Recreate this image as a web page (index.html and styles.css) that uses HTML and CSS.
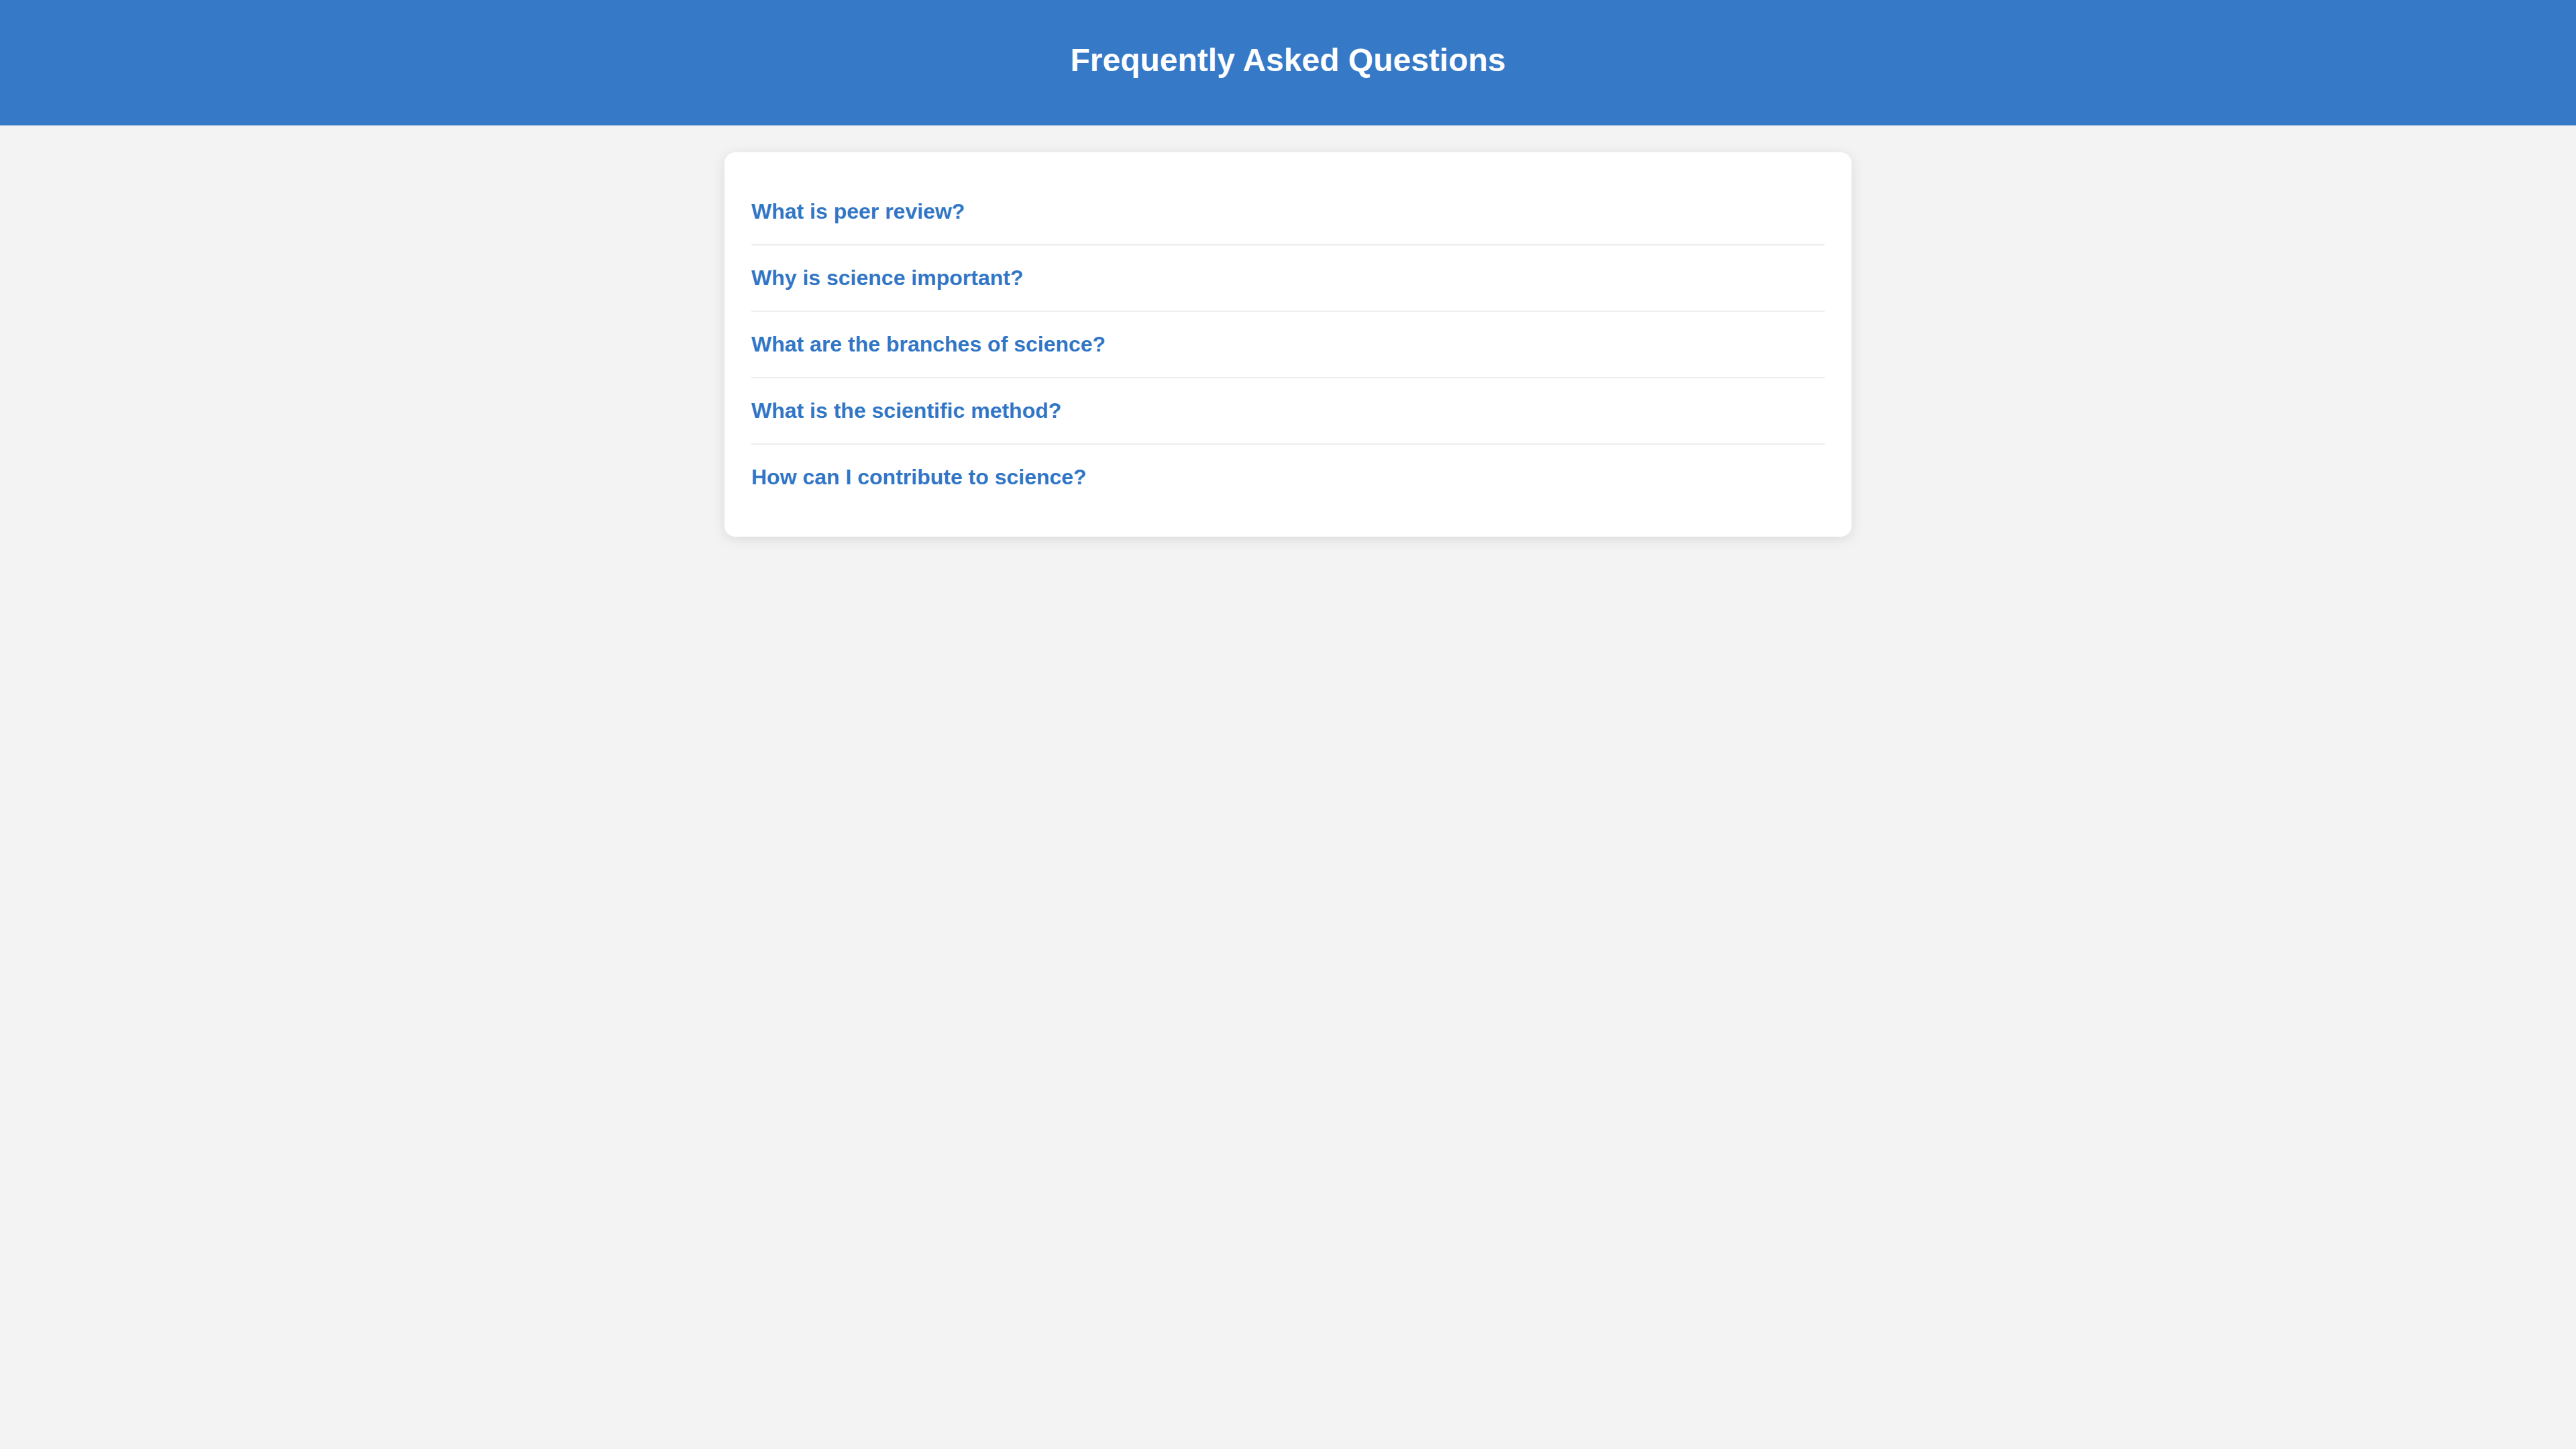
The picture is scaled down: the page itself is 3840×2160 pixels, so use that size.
FILE: index.html
```html
<!DOCTYPE html>
<html lang="en">
<head>
<meta charset="utf-8">
<title>Frequently Asked Questions</title>
<link rel="stylesheet" href="styles.css">
</head>
<body>
<header class="site-header">
  <h1 class="site-title">Frequently Asked Questions</h1>
</header>
<main class="faq-card">
  <div class="faq-item"><h2 class="faq-question">What is peer review?</h2></div>
  <div class="faq-item"><h2 class="faq-question">Why is science important?</h2></div>
  <div class="faq-item"><h2 class="faq-question">What are the branches of science?</h2></div>
  <div class="faq-item"><h2 class="faq-question">What is the scientific method?</h2></div>
  <div class="faq-item"><h2 class="faq-question">How can I contribute to science?</h2></div>
</main>
</body>
</html>
```
FILE: styles.css
```css
html, body {
  margin: 0;
  padding: 0;
}
body {
  background: #f3f3f3;
  font-family: "Liberation Sans", Arial, sans-serif;
  min-height: 2160px;
}
.site-header {
  background: #3679c7;
  padding: 62px 0 70px;
  text-align: center;
}
.site-title {
  margin: 0;
  color: #ffffff;
  font-size: 48px;
  font-weight: bold;
  line-height: normal;
}
.faq-card {
  display: block;
  width: 1680px;
  box-sizing: border-box;
  margin: 40px auto 0;
  padding: 40px 40px 40px;
  background: #ffffff;
  border-radius: 16px;
  box-shadow: 0 4px 20px rgba(0, 0, 0, 0.1);
}
.faq-item {
  padding: 30px 0;
  border-bottom: 2px solid #eeeeee;
}
.faq-item:last-child {
  border-bottom: none;
}
.faq-question {
  margin: 0;
  color: #3176c6;
  font-size: 32px;
  font-weight: bold;
  line-height: normal;
}
```
